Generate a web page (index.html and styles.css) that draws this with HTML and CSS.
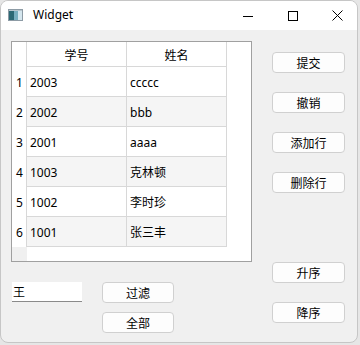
FILE: index.html
```html
<!DOCTYPE html>
<html lang="zh">
<head>
<meta charset="utf-8">
<title>Widget</title>
<link rel="stylesheet" href="styles.css">
</head>
<body>
<div class="window">
  <div class="titlebar">
    <svg class="app-icon" width="15" height="12" viewBox="0 0 15 12">
      <rect x="0.5" y="0.5" width="14" height="11" fill="#e4eaee" stroke="#8d9ba5"/>
      <rect x="1" y="2" width="5" height="9" fill="#2c6874"/>
      <rect x="6" y="2" width="4" height="9" fill="#78aebf"/>
      <rect x="10" y="2" width="4" height="9" fill="#d5e6ee"/>
      <rect x="1" y="1" width="13" height="1" fill="#b9c6ce"/>
    </svg>
    <span class="title">Widget</span>
    <div class="caption-buttons">
      <div class="cap-btn">
        <svg width="10" height="10" viewBox="0 0 10 10"><line x1="0" y1="5.5" x2="10" y2="5.5" stroke="#000" stroke-width="1"/></svg>
      </div>
      <div class="cap-btn">
        <svg width="10" height="10" viewBox="0 0 10 10"><rect x="0.5" y="0.5" width="9" height="9" fill="none" stroke="#000" stroke-width="1"/></svg>
      </div>
      <div class="cap-btn">
        <svg width="11" height="11" viewBox="0 0 11 11"><path d="M0.5 0.5 L10.5 10.5 M10.5 0.5 L0.5 10.5" stroke="#000" stroke-width="1"/></svg>
      </div>
    </div>
  </div>
  <div class="content">
    <div class="left-col">
      <div class="table-view">
        <div class="trow header">
          <div class="vhead corner"></div>
          <div class="cell hcell">学号</div>
          <div class="cell hcell">姓名</div>
        </div>
        <div class="trow">
          <div class="vhead">1</div>
          <div class="cell">2003</div>
          <div class="cell">ccccc</div>
        </div>
        <div class="trow alt">
          <div class="vhead">2</div>
          <div class="cell">2002</div>
          <div class="cell">bbb</div>
        </div>
        <div class="trow">
          <div class="vhead">3</div>
          <div class="cell">2001</div>
          <div class="cell">aaaa</div>
        </div>
        <div class="trow alt">
          <div class="vhead">4</div>
          <div class="cell">1003</div>
          <div class="cell">克林顿</div>
        </div>
        <div class="trow">
          <div class="vhead">5</div>
          <div class="cell">1002</div>
          <div class="cell">李时珍</div>
        </div>
        <div class="trow alt">
          <div class="vhead">6</div>
          <div class="cell">1001</div>
          <div class="cell">张三丰</div>
        </div>
        <div class="trow filler">
          <div class="vhead empty"></div>
        </div>
      </div>
      <div class="bottom-row">
        <div class="line-edit">王</div>
        <div class="btn-stack">
          <div class="btn">过滤</div>
          <div class="btn">全部</div>
        </div>
      </div>
    </div>
    <div class="right-col">
      <div class="btn">提交</div>
      <div class="btn">撤销</div>
      <div class="btn">添加行</div>
      <div class="btn">删除行</div>
      <div class="btn sort-first">升序</div>
      <div class="btn">降序</div>
    </div>
  </div>
</div>
</body>
</html>
```

FILE: styles.css
```css
html, body {
  margin: 0;
  padding: 0;
}
body {
  width: 360px;
  height: 345px;
  background: #e6e6e6;
  font-family: "Segoe UI", "Noto Sans", "Noto Sans CJK SC", sans-serif;
  font-size: 12px;
  color: #000;
  overflow: hidden;
}
.window {
  box-sizing: border-box;
  width: 358px;
  height: 343px;
  border: 1px solid #c6c6c6;
  border-radius: 8px;
  background: #f0f0f0;
  overflow: hidden;
}
.titlebar {
  height: 29px;
  background: #ffffff;
  display: flex;
  align-items: center;
}
.app-icon {
  margin-left: 7px;
  margin-top: -1px;
}
.title {
  margin-left: 10px;
  font-family: "Segoe UI", "Noto Sans", sans-serif;
  font-size: 12px;
  line-height: 16px;
  margin-top: -1px;
}
.caption-buttons {
  margin-left: auto;
  display: flex;
  height: 29px;
  margin-right: -3px;
}
.cap-btn {
  width: 45px;
  height: 29px;
  display: flex;
  align-items: center;
  justify-content: center;
}
.content {
  display: grid;
  grid-template-columns: 241px 73px;
  column-gap: 20px;
  padding: 11px 0 0 10px;
  font-family: "Noto Sans", "Noto Sans CJK SC", sans-serif;
}
.left-col {
  display: flex;
  flex-direction: column;
}
.table-view {
  box-sizing: border-box;
  width: 241px;
  height: 221px;
  border: 1px solid #a0a0a0;
  background: #ffffff;
  display: flex;
  flex-direction: column;
}
.trow {
  display: flex;
  height: 30px;
}
.trow.header {
  height: 25px;
}
.vhead {
  box-sizing: border-box;
  width: 15px;
  border-right: 1px solid #d8d8d8;
  background: #ffffff;
  display: flex;
  align-items: center;
  justify-content: center;
  padding-left: 1px;
}
.vhead.empty {
  background: #f0f0f0;
  border-right: none;
}
.trow.filler {
  flex: 1;
}
.cell {
  box-sizing: border-box;
  width: 100px;
  border-right: 1px solid #d8d8d8;
  border-bottom: 1px solid #d8d8d8;
  display: flex;
  align-items: center;
  padding-left: 3px;
  padding-top: 1px;
  white-space: nowrap;
}
.hcell {
  justify-content: center;
  padding-left: 0;
  padding-top: 0;
  font-family: "Noto Sans CJK SC", sans-serif;
}
.trow.alt .cell {
  background: #f5f5f5;
}
.bottom-row {
  display: flex;
  margin-top: 20px;
}
.line-edit {
  box-sizing: border-box;
  width: 70px;
  height: 20px;
  margin-left: 1px;
  background: #ffffff;
  border-bottom: 1px solid #8a8a8a;
  padding-left: 1px;
  font-family: "Noto Sans CJK SC", sans-serif;
  line-height: 19px;
}
.btn-stack {
  margin-left: 20px;
  display: flex;
  flex-direction: column;
  gap: 9px;
}
.btn-stack .btn {
  width: 72px;
}
.btn {
  box-sizing: border-box;
  width: 73px;
  height: 21px;
  background: #fdfdfd;
  border: 1px solid #d0d0d0;
  border-radius: 4px;
  display: flex;
  align-items: center;
  justify-content: center;
  font-family: "Noto Sans CJK SC", sans-serif;
  font-size: 12px;
  line-height: 14px;
}
.right-col {
  display: flex;
  flex-direction: column;
  gap: 19px;
  padding-top: 11px;
}
.right-col .sort-first {
  margin-top: 50px;
}
```
